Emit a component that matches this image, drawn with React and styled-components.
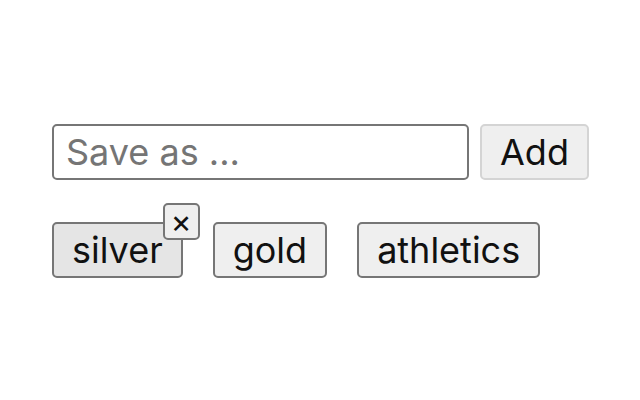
import React from "react";
import styled, { createGlobalStyle } from "styled-components";

const Global = createGlobalStyle`
  body {
    margin: 0;
    background: #fff;
    font-family: Inter, "Liberation Sans", sans-serif;
  }
`;

const Page = styled.div`
  padding: 124px 0 0 52px;
  display: flex;
  flex-direction: column;
  gap: 42px;
`;

const Row = styled.div`
  display: flex;
  align-items: center;
  gap: ${(p) => p.gap || 11}px;
`;

const Input = styled.input`
  box-sizing: border-box;
  width: 417px;
  height: 56px;
  border: 2px solid #767676;
  border-radius: 5px;
  padding: 0 12px;
  font-family: inherit;
  font-size: 36px;
  color: #111;
  outline: none;
  &::placeholder {
    color: #757575;
  }
`;

const Button = styled.button`
  box-sizing: border-box;
  height: 56px;
  padding: 0 ${(p) => p.pad || 18}px;
  border: 2px solid ${(p) => (p.light ? "#d4d4d4" : "#767676")};
  border-radius: 5px;
  background: ${(p) => (p.active ? "#e5e5e5" : "#efefef")};
  font-family: inherit;
  font-size: 36px;
  color: #111;
  cursor: pointer;
`;

const TagWrap = styled.div`
  position: relative;
`;

const Close = styled.button`
  position: absolute;
  top: -19px;
  right: -17px;
  box-sizing: border-box;
  width: 37px;
  height: 37px;
  padding: 0;
  border: 2px solid #767676;
  border-radius: 5px;
  background: #efefef;
  font-family: inherit;
  font-size: 32px;
  line-height: 1;
  color: #111;
  display: flex;
  align-items: center;
  justify-content: center;
`;

const tags = ["silver", "gold", "athletics"];

export default function App() {
  return (
    <>
      <Global />
      <Page>
        <Row>
          <Input placeholder="Save as ..." />
          <Button light>Add</Button>
        </Row>
        <Row gap={30}>
          {tags.map((t, i) => (
            <TagWrap key={t}>
              <Button active={i === 0}>{t}</Button>
              {i === 0 && <Close>×</Close>}
            </TagWrap>
          ))}
        </Row>
      </Page>
    </>
  );
}
